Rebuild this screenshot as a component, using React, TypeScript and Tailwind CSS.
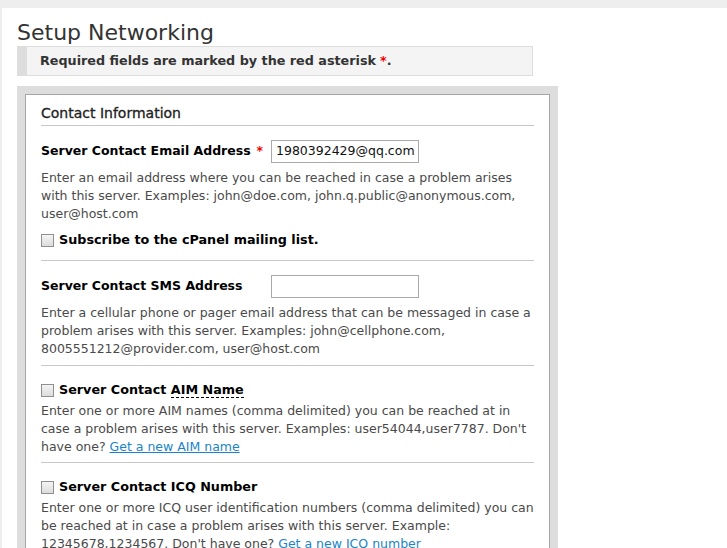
import React from "react"

const font = { fontFamily: '"DejaVu Sans", Verdana, sans-serif' }

function Checkbox() {
  return <span className="inline-block h-[13px] w-[13px] shrink-0 border border-[#8f8f8f] bg-gradient-to-b from-[#f4f4f4] to-[#dcdcdc]" />
}

function TextInput({ value }: { value?: string }) {
  return (
    <div className="flex h-[23px] w-[148px] items-center border border-[#a9a9a9] bg-white px-[4px] text-[12.5px] text-[#111]">
      {value}
    </div>
  )
}

function Desc({ children }: { children: React.ReactNode }) {
  return <p className="text-[12.5px] leading-[18px] text-[#4a4a4a]">{children}</p>
}

function Link({ children }: { children: React.ReactNode }) {
  return <a className="text-[#1a84c8] underline">{children}</a>
}

export default function App() {
  return (
    <div className="min-h-screen bg-[#eeeeee] pl-[2px] pt-[8px]" style={font}>
      <div className="min-h-[540px] bg-white pl-[15px] pt-[11px]">
        <h1 className="text-[22px] leading-[27px] text-[#333]">Setup Networking</h1>
        <div className="flex h-[30px] w-[516px] items-center border border-[#dddddd] border-l-[10px] bg-[#f4f4f4] pl-[13px] text-[12.75px] font-bold text-[#333]">
          Required fields are marked by the red asterisk <span className="ml-[4px] text-[#e00]">*</span>.
        </div>
        <div className="mt-[10px] w-[541px] bg-[#dddddd] px-[8px] pt-[8px]">
          <div className="border border-b-0 border-[#a6a6a6] bg-white px-[15px] pt-[9px]">
            <h2 className="border-b border-[#c8c8c8] pb-[3px] text-[14px] leading-[18px] text-[#222] [-webkit-text-stroke:0.3px_#222]">Contact Information</h2>

            <div className="border-b border-[#c8c8c8] pb-[11px] pt-[14px]">
              <div className="flex items-center">
                <div className="flex w-[230px] items-center whitespace-nowrap text-[12.5px] font-bold text-black">
                  Server Contact Email Address <span className="ml-[6px] text-[#e00]">*</span>
                </div>
                <TextInput value="1980392429@qq.com" />
              </div>
              <div className="mt-[6px]">
                <Desc>
                  Enter an email address where you can be reached in case a problem arises with this server. Examples: john@doe.com, john.q.public@anonymous.com, user@host.com
                </Desc>
              </div>
              <label className="mt-[8px] flex items-center gap-[5px] text-[12.75px] font-bold leading-[18px] text-black">
                <Checkbox />
                Subscribe to the cPanel mailing list.
              </label>
            </div>

            <div className="border-b border-[#c8c8c8] pb-[7px] pt-[14px]">
              <div className="flex items-center">
                <div className="w-[230px] whitespace-nowrap text-[12.5px] font-bold text-black">Server Contact SMS Address</div>
                <TextInput />
              </div>
              <div className="mt-[6px]">
                <Desc>
                  Enter a cellular phone or pager email address that can be messaged in case a problem arises with this server. Examples: john@cellphone.com, 8005551212@provider.com, user@host.com
                </Desc>
              </div>
            </div>

            <div className="border-b border-[#c8c8c8] pb-[6px] pt-[14px]">
              <label className="flex items-center gap-[5px] text-[12.75px] font-bold leading-[20px] text-black">
                <Checkbox />
                <span>
                  Server Contact <span className="border-b border-dashed border-black">AIM Name</span>
                </span>
              </label>
              <div className="mt-[2px]">
                <Desc>
                  Enter one or more AIM names (comma delimited) you can be reached at in case a problem arises with this server. Examples: user54044,user7787. Don't have one? <Link>Get a new AIM name</Link>
                </Desc>
              </div>
            </div>

            <div className="pb-[6px] pt-[14px]">
              <label className="flex items-center gap-[5px] text-[12.75px] font-bold leading-[20px] text-black">
                <Checkbox />
                Server Contact ICQ Number
              </label>
              <div className="mt-[2px]">
                <Desc>
                  Enter one or more ICQ user identification numbers (comma delimited) you can be reached at in case a problem arises with this server. Example: 12345678,1234567. Don't have one? <Link>Get a new ICQ number</Link>
                </Desc>
              </div>
            </div>
          </div>
        </div>
      </div>
    </div>
  )
}
